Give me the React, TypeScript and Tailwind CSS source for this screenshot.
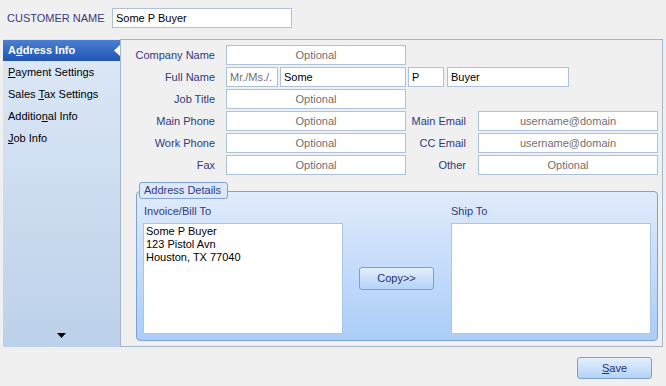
import React from 'react'

const font = { fontFamily: '"Liberation Sans", Arial, sans-serif' }

const Field = ({ w, value, center, muted }: { w: string; value: string; center?: boolean; muted?: boolean }) => (
  <div
    className={`${w} h-[20px] bg-white border border-[#abc1dc] flex items-center px-[3px] ${
      center ? 'justify-center' : ''
    } ${muted ? 'text-[#707070]' : 'text-black'}`}
  >
    {value}
  </div>
)

const Label = ({ w, children }: { w: string; children: React.ReactNode }) => (
  <div className={`${w} text-right text-[#2f3a80] shrink-0`}>{children}</div>
)

const NavItem = ({ children, active }: { children: React.ReactNode; active?: boolean }) =>
  active ? (
    <div className="relative h-[21px] flex items-center pl-[5px] font-bold text-white bg-gradient-to-b from-[#4b7fd2] to-[#2254b4]">
      <span>{children}</span>
      <svg className="absolute right-0 top-[5px]" width="6" height="11" viewBox="0 0 6 11">
        <path d="M6 0 L0 5.5 L6 11 Z" fill="white" />
      </svg>
    </div>
  ) : (
    <div className="h-[22px] flex items-center pl-[5px] text-black">
      <span>{children}</span>
    </div>
  )

const BlueButton = ({ children, cls }: { children: React.ReactNode; cls: string }) => (
  <div
    className={`${cls} flex items-center justify-center rounded-[3px] border border-[#7f9fc8] bg-gradient-to-b from-[#e4effc] to-[#b3d3f8] text-[#24306a]`}
  >
    {children}
  </div>
)

export default function App() {
  return (
    <div className="w-[666px] h-[386px] bg-[#f0f0f0] text-[11px] overflow-hidden" style={font}>
      <div className="flex items-center h-[20px] mt-[8px] pl-[7px]">
        <div className="w-[105px] text-[#3a3a80]">CUSTOMER NAME</div>
        <Field w="w-[180px]" value="Some P Buyer" />
      </div>

      <div className="flex mt-[11px] ml-[3px] mr-[3px] h-[308px]">
        <div className="w-[118px] border-r border-[#a3b6ca] bg-gradient-to-b from-[#dde8f6] to-[#bcd1ea] flex flex-col pt-[1px]">
          <NavItem active>
            A<span className="underline">d</span>dress Info
          </NavItem>
          <NavItem>
            <span className="underline">P</span>ayment Settings
          </NavItem>
          <NavItem>
            Sales <span className="underline">T</span>ax Settings
          </NavItem>
          <NavItem>
            Additio<span className="underline">n</span>al Info
          </NavItem>
          <NavItem>
            <span className="underline">J</span>ob Info
          </NavItem>
          <div className="mt-auto mb-[9px] flex justify-center pr-[1px]">
            <svg width="9" height="5" viewBox="0 0 9 5">
              <path d="M0 0 H9 L4.5 5 Z" fill="black" />
            </svg>
          </div>
        </div>

        <div className="flex-1 border-t border-r border-b border-[#a3b6ca] pt-[5px]">
          <div className="flex items-center h-[20px] mb-[2px]">
            <Label w="w-[94px]">Company Name</Label>
            <div className="ml-[11px]">
              <Field w="w-[180px]" value="Optional" center muted />
            </div>
          </div>
          <div className="flex items-center h-[20px] mb-[2px]">
            <Label w="w-[94px]">Full Name</Label>
            <div className="ml-[11px] flex gap-[2px]">
              <Field w="w-[52px]" value="Mr./Ms./." muted />
              <Field w="w-[126px]" value="Some" />
              <Field w="w-[36px]" value="P" />
              <div className="ml-[1px]">
                <Field w="w-[122px]" value="Buyer" />
              </div>
            </div>
          </div>
          <div className="flex items-center h-[20px] mb-[2px]">
            <Label w="w-[94px]">Job Title</Label>
            <div className="ml-[11px]">
              <Field w="w-[180px]" value="Optional" center muted />
            </div>
          </div>
          {[
            ['Main Phone', 'Main Email', 'username@domain'],
            ['Work Phone', 'CC Email', 'username@domain'],
            ['Fax', 'Other', 'Optional'],
          ].map(([a, b, v]) => (
            <div key={a} className="flex items-center h-[20px] mb-[2px]">
              <Label w="w-[94px]">{a}</Label>
              <div className="ml-[11px]">
                <Field w="w-[180px]" value="Optional" center muted />
              </div>
              <Label w="w-[60px]">{b}</Label>
              <div className="ml-[12px]">
                <Field w="w-[180px]" value={v} center muted />
              </div>
            </div>
          ))}

          <div className="relative mt-[7px] ml-[15px] w-[522px] pt-[9px]">
            <div className="absolute top-0 left-[3px] h-[17px] w-[89px] rounded-[3px] border border-[#7fa3d0] bg-[#dce8f9] flex items-center pl-[4px] text-[#2f3a80] z-10">
              Address Details
            </div>
            <div className="h-[150px] rounded-[4px] border border-[#7fa3d0] bg-gradient-to-b from-[#e0ebfb] to-[#aacdf9] flex px-[6px]">
              <div className="flex flex-col pt-[13px]">
                <div className="h-[13px] leading-[13px] text-[#2f3a80] pl-[1px]">Invoice/Bill To</div>
                <div className="mt-[5px] w-[200px] h-[111px] bg-white border border-[#a9c6e8] px-[2px] pt-[1px] leading-[13px] text-black">
                  <div>Some P Buyer</div>
                  <div>123 Pistol Avn</div>
                  <div>Houston, TX 77040</div>
                </div>
              </div>
              <div className="w-[109px] pt-[75px] pl-[16px]">
                <BlueButton cls="w-[75px] h-[23px]">Copy&gt;&gt;</BlueButton>
              </div>
              <div className="flex flex-col pt-[13px]">
                <div className="h-[13px] leading-[13px] text-[#2f3a80]">Ship To</div>
                <div className="mt-[5px] w-[200px] h-[111px] bg-white border border-[#a9c6e8]" />
              </div>
            </div>
          </div>
        </div>
      </div>

      <div className="flex justify-end pr-[14px] mt-[10px]">
        <BlueButton cls="w-[75px] h-[22px]">
          <span>
            <span className="underline">S</span>ave
          </span>
        </BlueButton>
      </div>
    </div>
  )
}
